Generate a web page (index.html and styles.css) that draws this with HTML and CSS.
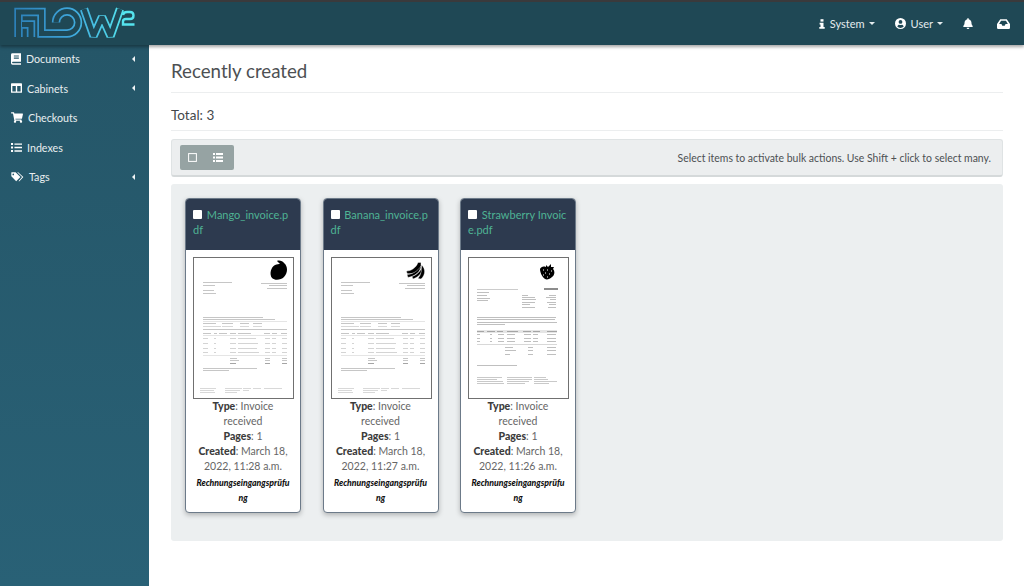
FILE: index.html
```html
<!DOCTYPE html>
<html lang="en">
<head>
	<meta charset="UTF-8">
	<title>Recently created</title>
	<link rel="stylesheet" href="styles.css">
</head>
<body>
<svg class="defs" width="0" height="0">
	<defs>
		<linearGradient id="logoGrad" gradientUnits="userSpaceOnUse" x1="15" y1="0" x2="125" y2="0">
			<stop offset="0" stop-color="#2c80b8"/>
			<stop offset="0.5" stop-color="#3ea5da"/>
			<stop offset="1" stop-color="#55e4ee"/>
		</linearGradient>
		<path id="logoShape" d="M18.500 37V12H41.500V33.500H67A11 11 0 1 0 56 22.500M31 37V24.500H22M84 9L93.500 36 102 17 110.500 36 120 9"/>
		<g id="invoiceA" fill="#b4b4b4">
			<rect x="10" y="25" width="29" height="1"/>
			<rect x="68" y="26" width="26" height="1"/>
			<rect x="76" y="28" width="18" height="1"/>
			<rect x="74" y="31" width="20" height="1"/>
			<rect x="10" y="28" width="12" height="1"/>
			<rect x="10" y="33" width="11" height="1"/>
			<rect x="10" y="36" width="13" height="1"/>
			<rect x="10" y="60" width="60" height="1"/>
			<rect x="10" y="62" width="72" height="1"/>
			<rect x="10" y="64" width="84" height="1" fill="#ddd"/>
			<rect x="10" y="66" width="13" height="1"/>
			<rect x="29" y="66" width="11" height="1"/>
			<rect x="47" y="66" width="9" height="1"/>
			<rect x="60" y="66" width="9" height="1"/>
			<rect x="10" y="69" width="18" height="1" fill="#ccc"/>
			<rect x="29" y="69" width="11" height="1" fill="#ccc"/>
			<rect x="47" y="69" width="9" height="1" fill="#ccc"/>
			<rect x="60" y="69" width="9" height="1" fill="#ccc"/>
			<rect x="10" y="72" width="84" height="1"/>
			<rect x="10" y="76" width="8" height="1"/>
			<rect x="21" y="76" width="3" height="1"/>
			<rect x="26" y="76" width="8" height="1"/>
			<rect x="37" y="76" width="6" height="1"/>
			<rect x="45" y="76" width="13" height="1"/>
			<rect x="71" y="76" width="6" height="1"/>
			<rect x="79" y="76" width="5" height="1"/>
			<rect x="88" y="76" width="6" height="1"/>
			<rect x="10" y="78" width="84" height="1" fill="#ddd"/>
			<g fill="#c6c6c6">
				<rect x="10" y="81" width="5" height="1"/><rect x="21" y="81" width="2" height="1"/><rect x="37" y="81" width="6" height="1"/><rect x="45" y="81" width="18" height="1"/><rect x="72" y="81" width="5" height="1"/><rect x="79" y="81" width="4" height="1"/><rect x="89" y="81" width="5" height="1"/>
				<rect x="10" y="86" width="5" height="1"/><rect x="21" y="86" width="2" height="1"/><rect x="37" y="86" width="6" height="1"/><rect x="45" y="86" width="20" height="1"/><rect x="72" y="86" width="5" height="1"/><rect x="79" y="86" width="4" height="1"/><rect x="89" y="86" width="5" height="1"/>
				<rect x="10" y="91" width="5" height="1"/><rect x="21" y="91" width="2" height="1"/><rect x="37" y="91" width="6" height="1"/><rect x="45" y="91" width="19" height="1"/><rect x="72" y="91" width="5" height="1"/><rect x="79" y="91" width="4" height="1"/><rect x="89" y="91" width="5" height="1"/>
				<rect x="10" y="95" width="5" height="1"/><rect x="21" y="95" width="2" height="1"/><rect x="37" y="95" width="6" height="1"/><rect x="45" y="95" width="21" height="1"/><rect x="72" y="95" width="5" height="1"/><rect x="79" y="95" width="4" height="1"/><rect x="89" y="95" width="5" height="1"/>
			</g>
			<rect x="10" y="98" width="84" height="1" fill="#ddd"/>
			<rect x="37" y="101" width="7" height="1"/><rect x="72" y="101" width="5" height="1"/><rect x="89" y="101" width="5" height="1"/>
			<rect x="37" y="103" width="9" height="1"/><rect x="72" y="103" width="5" height="1"/><rect x="89" y="103" width="5" height="1"/>
			<rect x="37" y="106" width="6" height="1" fill="#888"/><rect x="72" y="106" width="5" height="1" fill="#888"/><rect x="89" y="106" width="5" height="1" fill="#888"/>
			<rect x="10" y="111" width="54" height="1"/>
			<rect x="10" y="113" width="26" height="1"/>
			<g fill="#ccc">
				<rect x="7" y="131" width="16" height="1"/><rect x="7" y="133" width="14" height="1"/><rect x="7" y="135" width="15" height="1"/>
				<rect x="32" y="131" width="17" height="1"/><rect x="32" y="133" width="15" height="1"/><rect x="32" y="135" width="12" height="1"/>
				<rect x="50" y="131" width="8" height="1"/><rect x="60" y="131" width="8" height="1"/><rect x="71" y="131" width="18" height="1"/><rect x="50" y="133" width="6" height="1"/>
			</g>
		</g>
		<g id="invoiceB" fill="#aaa">
			<rect x="9" y="32" width="41" height="1" fill="#bbb"/>
			<rect x="76" y="31" width="14" height="2" fill="#666"/>
			<rect x="9" y="35" width="12" height="1"/><rect x="9" y="38" width="10" height="1"/><rect x="9" y="41" width="13" height="1"/><rect x="9" y="43" width="11" height="1"/>
			<rect x="54" y="38" width="6" height="1"/><rect x="54" y="40" width="13" height="1"/><rect x="54" y="42" width="14" height="1"/><rect x="54" y="45" width="13" height="1"/><rect x="54" y="47" width="8" height="1"/><rect x="54" y="50" width="13" height="1"/>
			<rect x="81" y="38" width="7" height="1"/><rect x="78" y="40" width="10" height="1"/><rect x="82" y="42" width="6" height="1"/><rect x="79" y="45" width="9" height="1"/><rect x="81" y="47" width="7" height="1"/><rect x="80" y="50" width="8" height="1"/>
			<rect x="9" y="60" width="79" height="1"/><rect x="9" y="62" width="78" height="1"/><rect x="9" y="65" width="80" height="1"/><rect x="9" y="67" width="28" height="1"/>
			<rect x="9" y="73" width="80" height="3" fill="#ddd"/>
			<rect x="9" y="74" width="7" height="1" fill="#888"/><rect x="19" y="74" width="8" height="1" fill="#888"/><rect x="29" y="74" width="6" height="1" fill="#888"/><rect x="39" y="74" width="11" height="1" fill="#888"/><rect x="55" y="74" width="8" height="1" fill="#888"/><rect x="65" y="74" width="7" height="1" fill="#888"/><rect x="79" y="74" width="10" height="1" fill="#888"/>
			<rect x="9" y="77" width="3" height="1"/><rect x="22" y="77" width="2" height="1"/><rect x="30" y="77" width="6" height="1"/><rect x="39" y="77" width="8" height="1"/><rect x="56" y="77" width="7" height="1"/><rect x="65" y="77" width="5" height="1"/><rect x="79" y="77" width="9" height="1"/>
			<rect x="9" y="81" width="3" height="1"/><rect x="22" y="81" width="2" height="1"/><rect x="30" y="81" width="6" height="1"/><rect x="39" y="81" width="8" height="1"/><rect x="56" y="81" width="7" height="1"/><rect x="65" y="81" width="5" height="1"/><rect x="79" y="81" width="9" height="1"/>
			<rect x="9" y="84" width="3" height="1"/><rect x="22" y="84" width="2" height="1"/><rect x="30" y="84" width="6" height="1"/><rect x="39" y="84" width="8" height="1"/><rect x="56" y="84" width="7" height="1"/><rect x="65" y="84" width="5" height="1"/><rect x="79" y="84" width="9" height="1"/>
			<rect x="9" y="87" width="80" height="1" fill="#ccc"/>
			<rect x="37" y="90" width="8" height="1"/><rect x="60" y="90" width="5" height="1"/><rect x="79" y="90" width="9" height="1"/>
			<rect x="37" y="93" width="11" height="1"/><rect x="60" y="93" width="5" height="1"/><rect x="79" y="93" width="9" height="1"/>
			<rect x="37" y="97" width="5" height="1"/><rect x="60" y="97" width="5" height="1"/><rect x="79" y="97" width="9" height="1"/>
			<rect x="9" y="108" width="40" height="1"/>
			<g fill="#b8b8b8">
				<rect x="9" y="120" width="25" height="1"/><rect x="9" y="122" width="20" height="1"/><rect x="9" y="124" width="26" height="1"/><rect x="9" y="126" width="27" height="1"/>
				<rect x="39" y="120" width="25" height="1"/><rect x="39" y="122" width="25" height="1"/><rect x="39" y="124" width="22" height="1"/><rect x="39" y="126" width="18" height="1"/>
				<rect x="66" y="120" width="12" height="1"/><rect x="66" y="122" width="14" height="1"/><rect x="66" y="124" width="23" height="1"/><rect x="66" y="126" width="15" height="1"/>
			</g>
		</g>
	</defs>
</svg>

<div class="topbar">
	<a class="logo" href="#">
		<svg width="145" height="43" viewBox="0 2 145 43">
			<g fill="none" stroke-miterlimit="2">
				<use href="#logoShape" stroke="url(#logoGrad)" stroke-width="8.400"/>
				<use href="#logoShape" stroke="#1f4855" stroke-width="5"/>
				<path d="M123 15Q123.500 12 127 12H130Q133.500 12 133.500 15.500T130 19H126Q123 19 123 21.500V24.500H134.500" stroke="#55e4ee" stroke-width="2.400"/>
			</g>
		</svg>
	</a>
	<div class="topnav">
		<a class="topitem" href="#">
			<svg class="ico" viewBox="0 0 10 16" width="6" height="12"><rect x="2.500" y="0" width="5" height="4"/><path d="M1 6H7.500V13H9.500V16H.5V13H2.500V9H1Z"/></svg>
			System <span class="caret"></span>
		</a>
		<a class="topitem" href="#">
			<svg class="ico" viewBox="0 0 16 16" width="11" height="11"><path fill-rule="evenodd" d="M8 0a8 8 0 1 0 0 16A8 8 0 0 0 8 0ZM8 3a2.700 2.700 0 1 1 0 5.500A2.700 2.700 0 0 1 8 3ZM3.300 12.300C4 10.600 5.500 9.800 6.500 10 7.500 10.300 8.500 10.300 9.500 10 10.500 9.800 12 10.600 12.700 12.300A6.200 6.200 0 0 1 3.300 12.300Z"/></svg>
			User <span class="caret"></span>
		</a>
		<a class="topicon" href="#">
			<svg class="ico" viewBox="0 0 448 512" width="10" height="11"><path d="M224 512c35.320 0 63.970-28.650 63.970-64H160.030c0 35.350 28.650 64 63.970 64zm215.390-149.710c-19.320-20.760-55.470-51.990-55.470-154.290 0-77.700-54.480-139.900-127.940-155.160V32c0-17.670-14.320-32-31.980-32s-31.980 14.330-31.980 32v20.840C118.560 68.100 64.080 130.300 64.080 208c0 102.300-36.150 133.530-55.470 154.290-6 6.450-8.660 14.160-8.610 21.710.11 16.400 12.980 32 32.100 32h383.800c19.120 0 32-15.600 32.100-32 .05-7.550-2.610-15.270-8.610-21.710z"/></svg>
		</a>
		<a class="topicon" href="#">
			<svg class="ico" viewBox="0 0 16 12" width="13" height="10"><path fill-rule="evenodd" d="M4 0H12L16 6V10.500Q16 12 14.500 12H1.500Q0 12 0 10.500V6ZM5 2 2.600 6H5.500L6.500 8H9.500L10.500 6H13.400L11 2Z"/></svg>
		</a>
	</div>
</div>

<div class="layout">
	<nav class="sidebar">
		<a class="navitem" href="#">
			<svg class="ico" viewBox="0 0 14 16" width="10" height="12"><path fill-rule="evenodd" d="M2 0H14V12H2.500Q1.500 12 1.500 13T2.500 14H14V16H2Q0 16 0 14V2Q0 0 2 0ZM4 3V4.500H11V3ZM4 6V7.500H11V6Z"/></svg>
			<span>Documents</span><span class="arrow"></span>
		</a>
		<a class="navitem" href="#">
			<svg class="ico" viewBox="0 0 16 14" width="11" height="10"><path fill-rule="evenodd" d="M1 0H15Q16 0 16 1V13Q16 14 15 14H1Q0 14 0 13V1Q0 0 1 0ZM2 4V12H7V4ZM9 4V12H14V4Z"/></svg>
			<span>Cabinets</span><span class="arrow"></span>
		</a>
		<a class="navitem" href="#">
			<svg class="ico" viewBox="0 0 576 512" width="12" height="11"><path d="M528.120 301.319l47.273-208C578.806 78.301 567.391 64 551.990 64H159.208l-9.166-44.810C147.758 8.021 137.930 0 126.529 0H24C10.745 0 0 10.745 0 24v16c0 13.255 10.745 24 24 24h69.883l70.248 343.435C147.325 417.100 136 435.222 136 456c0 30.928 25.072 56 56 56s56-25.072 56-56c0-15.674-6.447-29.835-16.824-40h209.647C430.447 426.165 424 440.326 424 456c0 30.928 25.072 56 56 56s56-25.072 56-56c0-22.172-12.888-41.332-31.579-50.405l5.517-24.276c3.413-15.018-8.002-29.319-23.403-29.319H218.117l-6.545-32h293.145c11.206 0 20.920-7.754 23.403-18.681z"/></svg>
			<span>Checkouts</span>
		</a>
		<a class="navitem" href="#">
			<svg class="ico" viewBox="0 0 16 13" width="11" height="9"><path d="M0 0H3V3H0ZM5 .5H16V2.500H5ZM0 5H3V8H0ZM5 5.500H16V7.500H5ZM0 10H3V13H0ZM5 10.500H16V12.500H5Z"/></svg>
			<span>Indexes</span>
		</a>
		<a class="navitem" href="#">
			<svg class="ico" viewBox="0 0 20 15" width="13" height="10"><path fill-rule="evenodd" d="M1 0H7L14.500 7.500 8 14 .5 6.500V1Q.5 0 1 0ZM3.500 2.200A1.300 1.300 0 1 0 3.500 4.800 1.300 1.300 0 0 0 3.500 2.200Z"/><path d="M9.500 0H11L19 7.500 13 14H11.500L17 7.500Z"/></svg>
			<span>Tags</span><span class="arrow"></span>
		</a>
	</nav>

	<main class="content">
		<h1 class="title">Recently created</h1>
		<h2 class="total">Total: 3</h2>

		<div class="toolbar">
			<div class="viewbtns">
				<a class="viewbtn" href="#"><svg viewBox="0 0 9 9" width="9" height="9"><rect x=".6" y=".6" width="7.800" height="7.800" fill="none" stroke="#fff" stroke-width="1"/></svg></a>
				<a class="viewbtn" href="#"><svg viewBox="0 0 10 9" width="10" height="9"><path d="M0 0H2V2H0ZM3 0H10V2H3ZM0 3.500H2V5.500H0ZM3 3.500H10V5.500H3ZM0 7H2V9H0ZM3 7H10V9H3Z" fill="#fff"/></svg></a>
			</div>
			<p class="hint">Select items to activate bulk actions. Use Shift + click to select many.</p>
		</div>

		<div class="cards">
			<div class="card">
				<div class="cardhead">
					<input type="checkbox">
					<a href="#">Mango_invoice.p<wbr>df</a>
				</div>
				<div class="cardbody">
					<svg class="thumb" viewBox="0 0 101 142" width="101" height="142">
						<rect x=".5" y=".5" width="100" height="141" fill="#fff" stroke="#707070"/>
						<use class="lines" href="#invoiceA"/>
						<path d="M84 4C86 3 90 4 91 6 95 9 95 16 91 20 88 23 82 24 79 21 76 17 78 10 82 8 84 7 86 7 87 7 86 6 85 5 84 4Z" fill="#000"/>
					</svg>
					<p><b>Type</b>: Invoice received</p>
					<p><b>Pages</b>: 1</p>
					<p><b>Created</b>: March 18, 2022, 11:28 a.m.</p>
					<p class="tag">Rechnungseingangsprüfu<wbr>ng</p>
				</div>
			</div>

			<div class="card">
				<div class="cardhead">
					<input type="checkbox">
					<a href="#">Banana_invoice.p<wbr>df</a>
				</div>
				<div class="cardbody">
					<svg class="thumb" viewBox="0 0 101 142" width="101" height="142">
						<rect x=".5" y=".5" width="100" height="141" fill="#fff" stroke="#707070"/>
						<use class="lines" href="#invoiceA"/>
						<g fill="#000" stroke="#fff" stroke-width=".4">
							<path d="M87 5.500L90 5.500 90 10C88 15 82 17.500 76 16.500L75.500 14C80 14 85 11 87 5.500Z"/>
							<path d="M90 9C89.500 15 84 19 77 20.500L76 17.500C81 17.500 87 14 90 9Z"/>
							<path d="M91 10C92 15 88 20 82 22L81 19.500C85 18.500 89.500 14.500 91 10Z"/>
							<path d="M90.500 8C95 12 94.500 18 90 22L87 21.500C90 18 91 13 90.500 8Z"/>
						</g>
					</svg>
					<p><b>Type</b>: Invoice received</p>
					<p><b>Pages</b>: 1</p>
					<p><b>Created</b>: March 18, 2022, 11:27 a.m.</p>
					<p class="tag">Rechnungseingangsprüfu<wbr>ng</p>
				</div>
			</div>

			<div class="card">
				<div class="cardhead">
					<input type="checkbox">
					<a href="#">Strawberry Invoic<wbr>e.pdf</a>
				</div>
				<div class="cardbody">
					<svg class="thumb" viewBox="0 0 101 142" width="101" height="142">
						<rect x=".5" y=".5" width="100" height="141" fill="#fff" stroke="#707070"/>
						<use class="lines" href="#invoiceB"/>
						<path d="M78 8L80 10 83 7 83 10 86 10 85 12C87 14 87 18 84 20 82 22 79 23 77 22 74 20 72 15 72 12 73 10 75 9 78 10Z" fill="#000"/>
						<path d="M75 13h1M79 13h1M83 14h1M77 16h1M81 17h1M75 18h1M79 20h1" stroke="#fff" stroke-width="1" fill="none"/>
					</svg>
					<p><b>Type</b>: Invoice received</p>
					<p><b>Pages</b>: 1</p>
					<p><b>Created</b>: March 18, 2022, 11:26 a.m.</p>
					<p class="tag">Rechnungseingangsprüfu<wbr>ng</p>
				</div>
			</div>
		</div>
	</main>
</div>
</body>
</html>
```

FILE: styles.css
```css
* { box-sizing: border-box; margin: 0; padding: 0; }
html, body { height: 586px; overflow: hidden; }
body { font-family: "Lato", "Liberation Sans", sans-serif; color: #4b4f52; background: #fff; display: flex; flex-direction: column; }
a { text-decoration: none; color: inherit; }
.defs { position: absolute; }
.ico { fill: #fff; display: block; flex: none; }

.topbar { height: 45px; flex: none; display: flex; justify-content: space-between; align-items: center; background: #1f4855; border-top: 2px solid #3a3a3c; box-shadow: 0 2px 3px rgba(0,0,0,.35); position: relative; z-index: 2; }
.logo { display: block; height: 43px; }
.logo svg { display: block; }
.topnav { display: flex; align-items: center; padding-right: 14px; }
.topitem { display: flex; align-items: center; gap: 5px; color: #e4ebee; font-size: 11px; margin-right: 20px; }
.topicon { display: block; margin-right: 24px; }
.topicon:last-child { margin-right: 0; }
.caret { width: 0; height: 0; border-left: 3px solid transparent; border-right: 3px solid transparent; border-top: 3px solid #e4ebee; margin-left: -1px; }

.layout { flex: 1; display: flex; min-height: 0; }
.sidebar { width: 149px; flex: none; background: linear-gradient(#255668, #296176); }
.navitem { height: 29.500px; display: flex; align-items: center; gap: 5px; padding: 0 14px 2px 11px; color: #e8eef0; font-size: 10.700px; }
.arrow { margin-left: auto; width: 0; height: 0; border-top: 3px solid transparent; border-bottom: 3px solid transparent; border-right: 3px solid #f0f4f5; }

.content { flex: 1; padding: 0 21px 0 22px; min-width: 0; }
.title { font-size: 18.700px; font-weight: 400; line-height: 24px; padding: 14px 0 9px; height: 48px; color: #4d5053; border-bottom: 1px solid #eceeef; }
.total { font-size: 13.500px; font-weight: 400; line-height: 20px; height: 38px; padding-top: 12px; color: #44484b; border-bottom: 1px solid #eceeef; margin-bottom: 8px; }

.toolbar { height: 38px; display: flex; align-items: center; justify-content: space-between; padding: 0 11px 0 8px; background: #eceeef; border: 1px solid #dfe3e4; border-bottom: 2px solid #d5d9da; border-radius: 3px; margin-bottom: 7px; }
.viewbtns { display: flex; background: #96a3a3; border-radius: 2px; height: 25px; padding-right: 4px; }
.viewbtn { width: 25px; display: flex; align-items: center; justify-content: center; }
.hint { font-size: 10.450px; color: #4d5053; }

.cards { height: 357px; display: flex; align-items: flex-start; gap: 21.500px; padding: 14px; background: #eceff0; border-radius: 3px; }
.card { width: 116px; height: 315px; background: #fff; border: 1px solid #6c7a89; border-radius: 4px; box-shadow: 0 2px 5px rgba(0,0,0,.25); overflow: hidden; }
.cardhead { height: 51px; background: #2d3a4f; padding: 8px 3px 0 7px; font-size: 11px; line-height: 15px; }
.cardhead a { color: #4fb394; }
.cardhead input { appearance: none; width: 9px; height: 9px; background: #fff; border-radius: 1px; margin-right: 2px; vertical-align: 0; }
.cardbody { padding: 7px 7px 0; text-align: center; font-size: 10.500px; line-height: 15px; color: #666; }
.thumb { display: block; margin: 0 auto; }
.lines { filter: blur(.45px); opacity: .75; }
.cardbody b { color: #3c3c3c; font-weight: 900; }
.tag { font-size: 8.700px; font-weight: 900; font-style: italic; color: #111; margin-top: 1px; }
```
